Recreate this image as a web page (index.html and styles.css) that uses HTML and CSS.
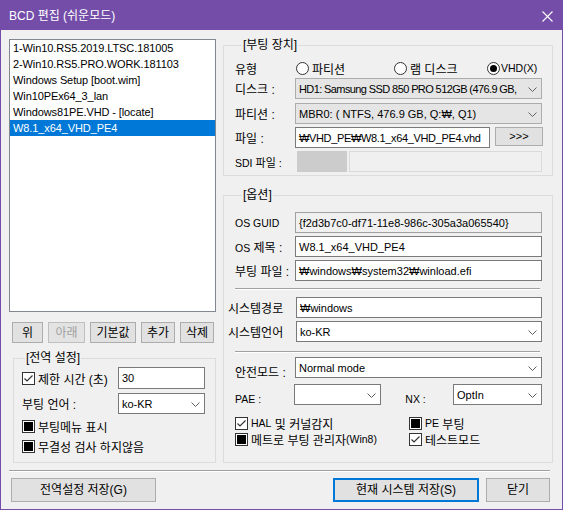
FILE: index.html
```html
<!DOCTYPE html>
<html lang="ko">
<head>
<meta charset="utf-8">
<title>BCD 편집</title>
<link rel="stylesheet" href="styles.css">
</head>
<body>
<div class="window">
  <div class="titlebar">
    <span class="title">BCD 편집 (쉬운모드)</span>
    <svg class="close" width="11" height="11" viewBox="0 0 11 11"><path d="M0.5 0.5L10.5 10.5M10.5 0.5L0.5 10.5" stroke="#fff" stroke-width="1.1" fill="none"/></svg>
  </div>

  <div class="main">
    <div class="leftcol">
      <div class="listbox">
        <div class="item">1-Win10.RS5.2019.LTSC.181005</div>
        <div class="item">2-Win10.RS5.PRO.WORK.181103</div>
        <div class="item">Windows Setup [boot.wim]</div>
        <div class="item">Win10PEx64_3_lan</div>
        <div class="item">Windows81PE.VHD - [locate]</div>
        <div class="item sel">W8.1_x64_VHD_PE4</div>
      </div>
      <div class="btnrow">
        <button class="btn w31">위</button>
        <button class="btn w37 disabled">아래</button>
        <button class="btn w46">기본값</button>
        <button class="btn w34">추가</button>
        <button class="btn w34">삭제</button>
      </div>
      <fieldset class="group g-global">
        <legend>[전역 설정]</legend>
        <div class="grow">
          <span class="chk"><svg class="cb" width="13" height="13" viewBox="0 0 13 13"><rect x="0.5" y="0.5" width="12" height="12" fill="#fff" stroke="#333"/><path d="M2.5 6.5L5 9L10.5 3.5" fill="none" stroke="#333" stroke-width="1.2"/></svg>제한 시간 (초)</span>
          <div class="tb w87">30</div>
        </div>
        <div class="grow r2">
          <span>부팅 언어 :</span>
          <div class="cmb w87">ko-KR<svg class="chev" width="9" height="5" viewBox="0 0 9 5"><path d="M0.5 0.5L4.5 4.5L8.5 0.5" fill="none" stroke="#606060"/></svg></div>
        </div>
        <div class="crow first"><svg class="cb" width="13" height="13" viewBox="0 0 13 13"><rect x="0.5" y="0.5" width="12" height="12" fill="#fff" stroke="#333"/><rect x="2" y="2" width="9" height="9" fill="#000"/></svg>부팅메뉴 표시</div>
        <div class="crow"><svg class="cb" width="13" height="13" viewBox="0 0 13 13"><rect x="0.5" y="0.5" width="12" height="12" fill="#fff" stroke="#333"/><rect x="2" y="2" width="9" height="9" fill="#000"/></svg>무결성 검사 하지않음</div>
      </fieldset>
    </div>

    <div class="rightcol">
      <fieldset class="group g-boot">
        <legend>[부팅 장치]</legend>
        <div class="frow r-type">
          <span>유형</span>
          <div class="radios">
            <span class="rad r1"><svg width="13" height="13" viewBox="0 0 13 13"><circle cx="6.5" cy="6.5" r="6" fill="#fff" stroke="#333"/></svg>파티션</span>
            <span class="rad r2"><svg width="13" height="13" viewBox="0 0 13 13"><circle cx="6.5" cy="6.5" r="6" fill="#fff" stroke="#333"/></svg>램 디스크</span>
            <span class="rad r3"><svg width="13" height="13" viewBox="0 0 13 13"><circle cx="6.5" cy="6.5" r="6" fill="#fff" stroke="#333"/><circle cx="6.5" cy="6.5" r="3.5" fill="#000"/></svg><span class="small">VHD(X)</span></span>
          </div>
        </div>
        <div class="frow r-disk">
          <span>디스크 :</span>
          <div class="cmb gray tighter"><span class="ctext">HD1: Samsung SSD 850 PRO 512GB (476.9 GB,</span><svg class="chev" width="9" height="5" viewBox="0 0 9 5"><path d="M0.5 0.5L4.5 4.5L8.5 0.5" fill="none" stroke="#606060"/></svg></div>
        </div>
        <div class="frow r-part">
          <span>파티션 :</span>
          <div class="cmb gray"><span class="ctext">MBR0: ( NTFS, 476.9 GB, Q:₩, Q1)</span><svg class="chev" width="9" height="5" viewBox="0 0 9 5"><path d="M0.5 0.5L4.5 4.5L8.5 0.5" fill="none" stroke="#606060"/></svg></div>
        </div>
        <div class="frow r-file">
          <span>파일 :</span>
          <div class="filebox">
            <div class="tb w195 tight">₩VHD_PE₩W8.1_x64_VHD_PE4.vhd</div>
            <button class="btn browse">&gt;&gt;&gt;</button>
          </div>
        </div>
        <div class="frow r-sdi">
          <span class="sdilbl"><span class="small">SDI</span> 파일 :</span>
          <div class="sdibox">
            <div class="sdi1"></div>
            <div class="sdi2"></div>
          </div>
        </div>
      </fieldset>

      <fieldset class="group g-opt">
        <legend>[옵션]</legend>
        <div class="frow">
          <span class="small">OS GUID</span>
          <div class="tb ro">{f2d3b7c0-df71-11e8-986c-305a3a065540}</div>
        </div>
        <div class="frow mt3">
          <span><span class="small">OS</span> 제목 :</span>
          <div class="tb">W8.1_x64_VHD_PE4</div>
        </div>
        <div class="frow mt3">
          <span>부팅 파일 :</span>
          <div class="tb">₩windows₩system32₩winload.efi</div>
        </div>
        <div class="hsep s1"></div>
        <div class="frow wide r-syspath">
          <span>시스템경로</span>
          <div class="tb">₩windows</div>
        </div>
        <div class="frow wide mt3">
          <span>시스템언어</span>
          <div class="cmb">ko-KR<svg class="chev" width="9" height="5" viewBox="0 0 9 5"><path d="M0.5 0.5L4.5 4.5L8.5 0.5" fill="none" stroke="#606060"/></svg></div>
        </div>
        <div class="hsep s2"></div>
        <div class="frow r-safe">
          <span class="low">안전모드 :</span>
          <div class="cmb">Normal mode<svg class="chev" width="9" height="5" viewBox="0 0 9 5"><path d="M0.5 0.5L4.5 4.5L8.5 0.5" fill="none" stroke="#606060"/></svg></div>
        </div>
        <div class="r-pae">
          <span class="small low4 lpae">PAE :</span>
          <div class="cmb w89"><svg class="chev" width="9" height="5" viewBox="0 0 9 5"><path d="M0.5 0.5L4.5 4.5L8.5 0.5" fill="none" stroke="#606060"/></svg></div>
          <span class="small low4 lnx">NX :</span>
          <div class="cmb w91">OptIn<svg class="chev" width="9" height="5" viewBox="0 0 9 5"><path d="M0.5 0.5L4.5 4.5L8.5 0.5" fill="none" stroke="#606060"/></svg></div>
        </div>
        <div class="chkgrid">
          <span class="chk"><svg class="cb" width="13" height="13" viewBox="0 0 13 13"><rect x="0.5" y="0.5" width="12" height="12" fill="#fff" stroke="#333"/><path d="M2.5 6.5L5 9L10.5 3.5" fill="none" stroke="#333" stroke-width="1.2"/></svg><span class="small">HAL</span>&nbsp;및 커널감지</span>
          <span class="chk"><svg class="cb" width="13" height="13" viewBox="0 0 13 13"><rect x="0.5" y="0.5" width="12" height="12" fill="#fff" stroke="#333"/><rect x="2" y="2" width="9" height="9" fill="#000"/></svg><span class="small">PE</span>&nbsp;부팅</span>
          <span class="chk"><svg class="cb" width="13" height="13" viewBox="0 0 13 13"><rect x="0.5" y="0.5" width="12" height="12" fill="#fff" stroke="#333"/><rect x="2" y="2" width="9" height="9" fill="#000"/></svg>메트로 부팅 관리자<span class="small">(Win8)</span></span>
          <span class="chk"><svg class="cb" width="13" height="13" viewBox="0 0 13 13"><rect x="0.5" y="0.5" width="12" height="12" fill="#fff" stroke="#333"/><path d="M2.5 6.5L5 9L10.5 3.5" fill="none" stroke="#333" stroke-width="1.2"/></svg>테스트모드</span>
        </div>
      </fieldset>
    </div>
  </div>

  <div class="hsep bottom"></div>
  <div class="footer">
    <button class="btn fbtn w145">전역설정 저장(G)</button>
    <button class="btn fbtn w146 default">현재 시스템 저장(S)</button>
    <button class="btn fbtn w64">닫기</button>
  </div>
</div>
</body>
</html>
```

FILE: styles.css
```css
* { box-sizing: border-box; }
html, body { margin: 0; padding: 0; }
body {
  width: 563px;
  height: 510px;
  overflow: hidden;
  background: #f0f0f0;
  color: #000;
  font-family: "Liberation Sans", "Noto Sans CJK KR", sans-serif;
  font-size: 12px;
}
.window {
  width: 563px;
  height: 510px;
  border: 1px solid #744da9;
  background: #f0f0f0;
  display: flex;
  flex-direction: column;
}
.titlebar {
  flex: none;
  height: 29px;
  background: #744da9;
  color: #fff;
  display: flex;
  align-items: center;
  justify-content: space-between;
  padding: 0 9px 0 8px;
}
.title { font-size: 12px; line-height: 16px; }
.close { display: block; margin-top: 1px; }

.main { display: flex; gap: 7px; padding: 8px 0 0 8px; }
.leftcol { flex: none; width: 207px; display: flex; flex-direction: column; }
.rightcol { flex: none; width: 330px; display: flex; flex-direction: column; }

.listbox {
  margin-top: 1px;
  height: 273px;
  border: 1px solid #828790;
  background: #fff;
  font-size: 11px;
}
.item { height: 16px; line-height: 16px; padding-left: 3px; white-space: nowrap; letter-spacing: -0.1px; }
.item.sel { background: #0078d7; color: #fff; }

.btn {
  height: 21px;
  border: 1px solid #adadad;
  background: #e1e1e1;
  color: #000;
  font-family: inherit;
  font-size: 12px;
  padding: 0;
  margin: 0;
  line-height: 1;
  display: flex;
  align-items: center;
  justify-content: center;
}
.btn.disabled { color: #a0a0a0; border-color: #bfbfbf; background: #e3e3e3; }
.btnrow { display: flex; gap: 5px; margin-top: 10px; padding-left: 3px; }
.w31 { width: 31px; }
.w34 { width: 34px; }
.w37 { width: 37px; }
.w46 { width: 46px; }

.group {
  margin: 0;
  padding: 0;
  min-width: 0;
  border: 1px solid #dcdcdc;
}
.group > legend {
  margin-left: 7px;
  padding: 0 1px;
  font-size: 12px;
  line-height: 14px;
  height: 14px;
}

/* global settings */
.g-global {
  margin: 8px 0 0 4px;
  width: 203px;
  height: 112px;
  padding: 2px 10px 0 8px;
}
.g-global > legend { margin-left: 3px; }
.grow { display: flex; align-items: center; justify-content: space-between; height: 22px; }
.grow.r2 { margin-top: 4px; height: 21px; }
.crow { display: flex; align-items: center; height: 20px; }
.crow.first { margin-top: 2px; }
.cb { display: block; flex: none; margin-right: 3px; }
.chk { display: flex; align-items: center; white-space: nowrap; }

.tb, .cmb {
  height: 21px;
  border: 1px solid #7a7a7a;
  background: #fff;
  padding-left: 3px;
  display: flex;
  align-items: center;
  white-space: nowrap;
  overflow: hidden;
  font-size: 11px;
  position: relative;
}
.tight { letter-spacing: -0.35px; }
.tighter { letter-spacing: -0.6px; }
.grow .tb { height: 22px; }
.tb.ro { background: #f0f0f0; border-color: #a0a0a0; }
.cmb { padding-right: 17px; }
.cmb.gray { background: #e5e5e5; border-color: #acacac; }
.cmb .ctext { overflow: hidden; }
.chev { position: absolute; right: 4px; top: 50%; margin-top: -2px; }
.w87 { width: 87px; }
.w89 { width: 89px; }
.w91 { width: 91px; }
.w195 { width: 195px; }

/* right column */
.g-boot { height: 138px; padding: 6px 10px 0 11px; }
.g-opt { margin-top: 12px; height: 275px; padding: 10px 10px 0 11px; }
.frow { display: grid; grid-template-columns: 60px 1fr; align-items: center; height: 21px; white-space: nowrap; }
.r-type { height: 20px; }
.r-part { margin-top: 4px; }
.r-file { margin-top: 3px; }
.r-sdi { margin-top: 3px; }
.mt3 { margin-top: 3px; }
.small { font-size: 10.5px; }
.sdilbl { font-size: 11px; }

.radios { display: flex; align-items: center; padding-left: 1px; }
.rad { display: flex; align-items: center; }
.rad svg { display: block; margin-right: 3px; }
.rad.r1 { width: 98px; }
.rad.r2 { width: 93px; }
.rad.r3 svg { margin-right: 1px; }

.filebox { display: flex; align-items: flex-start; gap: 5px; }
.browse { width: 48px; height: 19px; font-size: 11px; }
.sdibox { display: flex; gap: 2px; padding-left: 2px; }
.sdi1 { width: 50px; height: 21px; background: #cccccc; }
.sdi2 { width: 193px; height: 21px; background: #f0f0f0; border: 1px solid #dadada; }

.hsep { height: 2px; border-top: 1px solid #a0a0a0; border-bottom: 1px solid #fff; }
.hsep.s1 { margin: 7px 2px 0 0; }
.hsep.s2 { margin: 9px 2px 0 0; }
.frow.wide { grid-template-columns: 68px 1fr; margin-left: -7px; }
.r-syspath { margin-top: 7px; }
.r-safe { margin-top: 4px; }
.low { align-self: end; position: relative; top: 2px; }
.r-pae { display: flex; align-items: center; height: 21px; margin-top: 6px; white-space: nowrap; }
.low4 { position: relative; top: 4px; }
.lpae { width: 61px; }
.lnx { width: 68px; margin-left: 5px; padding-left: 19px; }
.chkgrid { display: grid; grid-template-columns: 174px 1fr; grid-auto-rows: 16px; margin-top: 10px; align-items: center; }

/* footer */
.hsep.bottom { margin: 7px 12px 0 8px; }
.footer { display: flex; padding: 0 12px 0 10px; margin-top: 6px; }
.fbtn { height: 24px; }
.w145 { width: 145px; }
.w146 { width: 146px; margin-left: auto; }
.w64 { width: 64px; margin-left: 7px; }
.default { border: 2px solid #0078d7; }
```
